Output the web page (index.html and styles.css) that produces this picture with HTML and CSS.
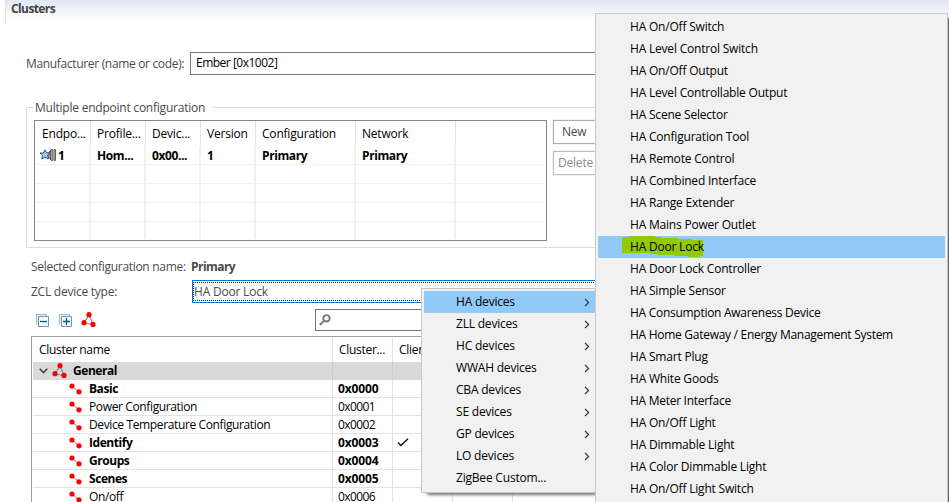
FILE: index.html
```
<!DOCTYPE html>
<html lang="en">
<head>
<meta charset="utf-8">
<title>Clusters</title>
<link rel="stylesheet" href="styles.css">
</head>
<body>
<svg class="defs" aria-hidden="true">
  <symbol id="tri" viewBox="0 0 15 15"><path d="M8 3L3 11M8 3l4 9M3 11l9 1.500" fill="none" stroke="#7d8790" stroke-width="1.200"/><circle cx="8" cy="2.700" r="2.600" fill="red"/><circle cx="3" cy="10.700" r="2.600" fill="red"/><circle cx="12" cy="12.400" r="2.600" fill="red"/></symbol>
  <symbol id="pair" viewBox="0 0 13 12"><path d="M3 3l7 6" stroke="#7d8790"/><circle cx="3" cy="3" r="2.600" fill="red"/><circle cx="10" cy="8.800" r="2.600" fill="red"/></symbol>
  <symbol id="chev" viewBox="0 0 6 9"><path d="M1 .8l3.600 3.700L1 8.200" fill="none" stroke="#333" stroke-width="1.200"/></symbol>
</svg>
<div class="window">
  <header class="title">Clusters</header>
  <main>
    <div class="maker"><label>Manufacturer (name or code):</label><div class="input">Ember [0x1002]</div></div>

    <section class="group">
      <h2>Multiple endpoint configuration</h2>
      <div class="endpoints">
        <div class="grid head"><span>Endpo...</span><span>Profile...</span><span>Devic...</span><span>Version</span><span>Configuration</span><span>Network</span><span></span></div>
        <div class="grid first"><span class="ep"><svg width="17" height="12" viewBox="0 0 17 12"><path d="M6.500 6L11 1v10z" fill="#999" stroke="#444" stroke-width=".8"/><path d="M11 .6h1.800v10.800H11z" fill="#ddd" stroke="#444" stroke-width=".8"/><path d="M14 .6h1.500v10.800H14z" fill="#ccc" stroke="#444" stroke-width=".8"/><path d="M0 4h3.500L5 .8l1.500 3L10 4 7.600 6.300l.8 3.500L5 8.300 1.800 10l.7-3.500z" fill="#8fd0f4" stroke="#345" stroke-width=".9"/></svg>1</span><span>Hom...</span><span>0x00...</span><span>1</span><span>Primary</span><span>Primary</span><span></span></div>
        <div class="grid"><span></span><span></span><span></span><span></span><span></span><span></span><span></span></div>
        <div class="grid"><span></span><span></span><span></span><span></span><span></span><span></span><span></span></div>
        <div class="grid"><span></span><span></span><span></span><span></span><span></span><span></span><span></span></div>
        <div class="grid last"><span></span><span></span><span></span><span></span><span></span><span></span><span></span></div>
      </div>
      <div class="buttons"><div class="btn new">New</div><div class="btn off">Delete</div></div>
    </section>

    <div class="selected"><span>Selected configuration name:</span><b>Primary</b></div>
    <div class="device"><label>ZCL device type:</label><div class="combo"><div>HA Door Lock</div></div></div>
    <div class="tools">
      <svg width="14" height="14" viewBox="0 0 14 14"><path d="M.5 10.500V.5h10v2" fill="#e8f1f8" stroke="#9bb6ca"/><path d="M2.500 2.500h10v10h-10z" fill="#f4fafd" stroke="#7293ae"/><path d="M4 7.500h7" stroke="#0b5685" stroke-width="1.300"/></svg>
      <svg width="14" height="14" viewBox="0 0 14 14"><path d="M.5 10.500V.5h10v2" fill="#e8f1f8" stroke="#9bb6ca"/><path d="M2.500 2.500h10v10h-10z" fill="#f4fafd" stroke="#7293ae"/><path d="M4 7.500h7M7.500 4v7" stroke="#0b5685" stroke-width="1.300"/></svg>
      <svg class="t3" width="15" height="15"><use href="#tri"/></svg>
      <div class="search"><svg width="12" height="12" viewBox="0 0 12 12"><circle cx="7.500" cy="4.300" r="3.200" fill="none" stroke="#777" stroke-width="1.900"/><path d="M5 6.800L.8 11" stroke="#777" stroke-width="1.900"/></svg></div>
    </div>

    <section class="clusters">
      <div class="row thead"><span>Cluster name</span><span>Cluster...</span><span>Client</span><span></span><span></span></div>
      <div class="row general"><span><svg class="open" width="9" height="6" viewBox="0 0 9 6"><path d="M.7.8l3.800 3.800L8.300.8" fill="none" stroke="#444" stroke-width="1.600"/></svg><svg width="15" height="15"><use href="#tri"/></svg><b>General</b></span><span></span><span></span><span></span><span></span></div>
      <div class="row on"><span><svg width="13" height="12"><use href="#pair"/></svg>Basic</span><span>0x0000</span><span></span><span></span><span></span></div>
      <div class="row"><span><svg width="13" height="12"><use href="#pair"/></svg>Power Configuration</span><span>0x0001</span><span></span><span></span><span></span></div>
      <div class="row"><span><svg width="13" height="12"><use href="#pair"/></svg>Device Temperature Configuration</span><span>0x0002</span><span></span><span></span><span></span></div>
      <div class="row on"><span><svg width="13" height="12"><use href="#pair"/></svg>Identify</span><span>0x0003</span><span><svg class="tick" width="12" height="9" viewBox="0 0 12 9"><path d="M1 4.500l3 3L11 .8" fill="none" stroke="#111" stroke-width="1.400"/></svg></span><span></span><span></span></div>
      <div class="row on"><span><svg width="13" height="12"><use href="#pair"/></svg>Groups</span><span>0x0004</span><span></span><span></span><span></span></div>
      <div class="row on"><span><svg width="13" height="12"><use href="#pair"/></svg>Scenes</span><span>0x0005</span><span></span><span></span><span></span></div>
      <div class="row"><span><svg width="13" height="12"><use href="#pair"/></svg>On/off</span><span>0x0006</span><span></span><span></span><span></span></div>
    </section>
  </main>

  <ul class="menu types">
    <li class="hot">HA devices<svg width="6" height="9"><use href="#chev"/></svg></li>
    <li>ZLL devices<svg width="6" height="9"><use href="#chev"/></svg></li>
    <li>HC devices<svg width="6" height="9"><use href="#chev"/></svg></li>
    <li>WWAH devices<svg width="6" height="9"><use href="#chev"/></svg></li>
    <li>CBA devices<svg width="6" height="9"><use href="#chev"/></svg></li>
    <li>SE devices<svg width="6" height="9"><use href="#chev"/></svg></li>
    <li>GP devices<svg width="6" height="9"><use href="#chev"/></svg></li>
    <li>LO devices<svg width="6" height="9"><use href="#chev"/></svg></li>
    <li>ZigBee Custom...</li>
  </ul>
  <ul class="menu devices">
    <li>HA On/Off Switch</li>
    <li>HA Level Control Switch</li>
    <li>HA On/Off Output</li>
    <li>HA Level Controllable Output</li>
    <li>HA Scene Selector</li>
    <li>HA Configuration Tool</li>
    <li>HA Remote Control</li>
    <li>HA Combined Interface</li>
    <li>HA Range Extender</li>
    <li>HA Mains Power Outlet</li>
    <li class="hot"><svg class="marker" width="82" height="22" viewBox="0 0 82 22"><path d="M0 1h7V0h26v1h7v1h16v1h14v1h11v16h-3v1H66v-1H53v-1H36v-1h-7v-1H0z" fill="#93c900"/></svg><span>HA Door Lock</span></li>
    <li>HA Door Lock Controller</li>
    <li>HA Simple Sensor</li>
    <li class="long">HA Consumption Awareness Device</li>
    <li class="long">HA Home Gateway / Energy Management System</li>
    <li>HA Smart Plug</li>
    <li>HA White Goods</li>
    <li class="long">HA Meter Interface</li>
    <li>HA On/Off Light</li>
    <li>HA Dimmable Light</li>
    <li>HA Color Dimmable Light</li>
    <li>HA On/Off Light Switch</li>
  </ul>
</div>
</body>
</html>
```
FILE: styles.css
```
* { box-sizing: border-box; }
body { margin: 0; background: #fff; color: #000; font: 12px/18px "Open Sans", "Noto Sans", sans-serif; letter-spacing: -.2px; overflow: hidden; }
.defs { position: absolute; width: 0; height: 0; }
svg { display: block; flex: none; }
b { font-weight: 700; }
.window { position: relative; width: 949px; height: 502px; overflow: hidden; white-space: nowrap; }
.title { height: 24px; margin-left: 5px; padding-left: 5px; border-left: 1px solid #e1e6ee; background: linear-gradient(#e0e8f3, #e9eff4 6px, #fff 20px); color: #444; font-weight: 700; letter-spacing: -.6px; }
main { padding-top: 28px; color: #4a4a4a; }
.maker { display: flex; height: 23px; padding-left: 26px; line-height: 23px; letter-spacing: -.33px; }
.maker label { width: 164px; }
.input { flex: 1; border: 1px solid #777; padding-left: 5px; line-height: 20px; color: #000; letter-spacing: -.5px; }
.group { display: flex; height: 141px; margin: 32px 0 0 26px; border: 1px solid #dcdcdc; padding: 12px 0 0 7px; }
.group h2 { height: 18px; margin: -21px -178px 0 -1px; width: 179px; padding: 0 2px; background: #fff; font: inherit; letter-spacing: -.23px; position: relative; }
.endpoints { width: 513px; height: 121px; padding: 0 2px 0 1px; border: 1px solid #828790; background: #fff; color: #000; }
.grid { display: grid; grid-template-columns: 55px 55px 55px 55px 100px 100px 1fr; height: 19px; border-bottom: 1px solid #f0f0f0; }
.grid span { border-right: 2px solid #edf1fa; padding-left: 6px; overflow: hidden; }
.grid span:last-child { border-right: 0; }
.head { height: 25px; border: 0; line-height: 25px; }
.head span { border-right: 1px solid #e5e5e5; }
.first { font-weight: 700; letter-spacing: -.4px; line-height: 19px; }
.grid .ep { display: flex; align-items: center; gap: 1px; padding-left: 4px; }
.last { height: 17px; border: 0; }
.buttons { display: flex; flex-direction: column; gap: 7px; margin-left: 6px; }
.btn { width: 60px; height: 24px; border: 1px solid #adadad; outline: 1px solid #f3f3f3; padding-left: 4px; line-height: 22px; }
.new { padding-left: 8px; }
.off { color: #888; border-color: #bfbfbf; }
.selected { display: flex; height: 32px; padding-left: 31px; line-height: 38px; }
.selected span { width: 160px; letter-spacing: -.3px; }
.selected b { letter-spacing: -.55px; }
.device { display: flex; height: 23px; padding-left: 31px; line-height: 24px; }
.device label { width: 161px; letter-spacing: -.25px; }
.combo { flex: 1; border: 1px solid #0078d7; padding: 1px 0; }
.combo div { height: 19px; border: 1px dotted #222; line-height: 17px; }
.tools { display: flex; height: 34px; padding: 6px 0 0 36px; }
.tools svg { margin: 5px 9px 0 0; }
.tools .t3 { margin: 3px 0 0 -1px; }
.search { width: 300px; height: 22px; margin-left: 219px; border: 1px solid #777; padding-left: 3px; }
.tools .search svg { margin: 4px 0 0; }
.clusters { margin: -1px 0 0 31px; border: 1px solid #a0a0a0; border-right: 0; padding-left: 1px; color: #000; }
.row { display: grid; grid-template-columns: 300px 60px 60px 60px 1fr; height: 18px; border-bottom: 1px solid #e2e2e2; line-height: 17px; letter-spacing: -.37px; }
.row > span { display: flex; align-items: center; border-right: 1px solid #e2e2e2; padding-left: 5px; }
.row > span:nth-child(2) { letter-spacing: -.6px; }
.row > span:nth-child(3) { padding-left: 4px; }
.row > span:first-child { padding-left: 36px; }
.row > span:first-child svg { margin-right: 7px; }
.row.thead { height: 25px; padding-top: 1px; border: 0; line-height: 24px; }
.thead > span:nth-child(n), .row.thead > span:first-child { padding-left: 6px; letter-spacing: -.3px; }
.row.general { background: #d9d9d9; border-color: #d9d9d9; }
.row.general > span { border-color: #ccc; }
.row.general > span:first-child { padding-left: 6px; }
.row.general > span:first-child svg { margin-right: 6px; }
.row.general > span:first-child .open { margin-right: 4px; }
.row.on, .row.general { font-weight: 700; letter-spacing: -.45px; }
.row.on > span:nth-child(2) { letter-spacing: -.15px; }
.menu { position: absolute; margin: 0; padding: 2px; list-style: none; border: 1px solid #c8c8c8; background: #f1f1f1; }
.menu li { display: flex; align-items: center; justify-content: space-between; height: 22px; padding-left: 32px; line-height: 22px; position: relative; }
.menu .hot { background: #91c9f7; }
.menu .long { letter-spacing: -.28px; }
.types { left: 421px; top: 288px; width: 182px; height: 205px; box-shadow: 4px 4px 3px -2px #777; }
.types svg { margin-right: 10px; }
.devices { left: 595px; top: 13px; width: 353px; height: 510px; box-shadow: 4px 4px 2px -1px #666; }
.menu .marker { position: absolute; left: 24px; top: 0; }
.hot span { position: relative; }
```
